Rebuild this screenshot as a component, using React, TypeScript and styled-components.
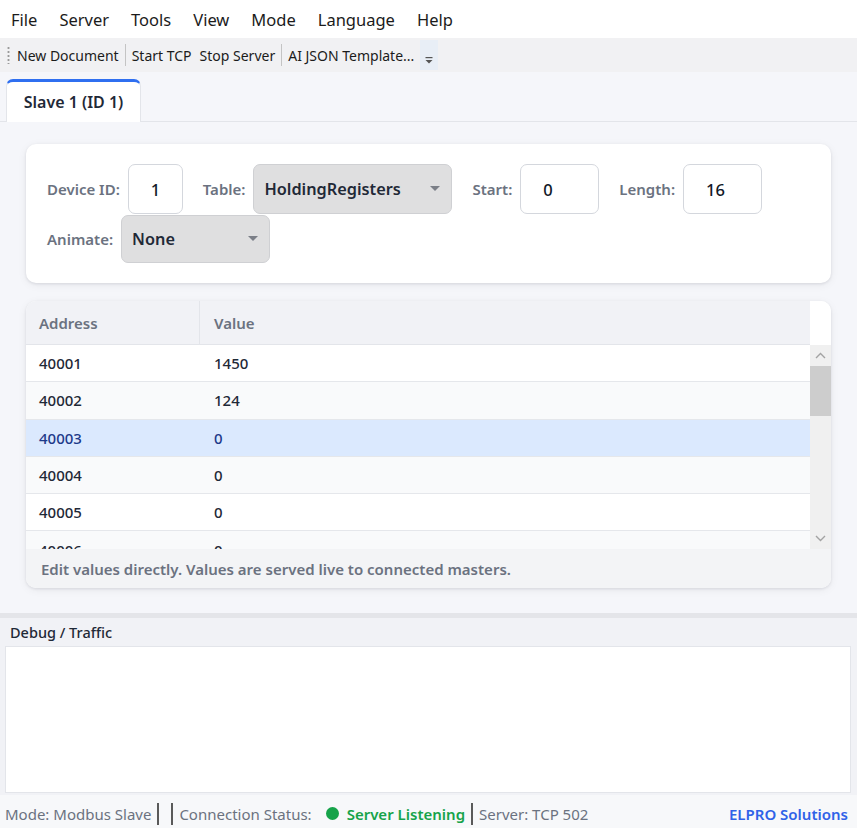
import React from 'react'
import styled, { createGlobalStyle } from 'styled-components'

const FONT = `"Noto Sans", "Open Sans", "DejaVu Sans", sans-serif`

const GlobalStyle = createGlobalStyle`
  html, body {
    margin: 0;
    padding: 0;
    height: 100%;
  }
  body {
    font-family: ${FONT};
    background: #f5f6fa;
    overflow: hidden;
  }
  #root {
    height: 100%;
  }
  * {
    box-sizing: border-box;
  }
`

interface RegisterRow {
  address: number
  value: number
}

const rows: RegisterRow[] = [
  { address: 40001, value: 1450 },
  { address: 40002, value: 124 },
  { address: 40003, value: 0 },
  { address: 40004, value: 0 },
  { address: 40005, value: 0 },
  { address: 40006, value: 0 }
]

const SELECTED_ROW = 2

const menus = ['File', 'Server', 'Tools', 'View', 'Mode', 'Language', 'Help']

const Caret = () => (
  <svg width="10" height="6" viewBox="0 0 10 6">
    <path d="M0 0 L10 0 L5 5 Z" fill="#7b7f87" />
  </svg>
)

const Chevron: React.FC<{ up?: boolean }> = ({ up }) => (
  <svg width="11" height="7" viewBox="0 0 11 7">
    <path
      d={up ? 'M1 6 L5.5 1.5 L10 6' : 'M1 1 L5.5 5.5 L10 1'}
      fill="none"
      stroke="#a3a3a3"
      strokeWidth="1.4"
    />
  </svg>
)

const OverflowGlyph = () => (
  <svg width="8" height="8" viewBox="0 0 8 8">
    <rect x="0.5" y="0" width="7" height="1.2" fill="#555" />
    <path d="M0.5 3 L7.5 3 L4 6.5 Z" fill="#555" />
  </svg>
)

const App: React.FC = () => {
  return (
    <Window>
      <GlobalStyle />
      <MenuBar>
        {menus.map((m) => (
          <MenuItem key={m}>{m}</MenuItem>
        ))}
      </MenuBar>

      <ToolBar>
        <Grip />
        <ToolButton>New Document</ToolButton>
        <ToolSep />
        <ToolButton>Start TCP</ToolButton>
        <ToolButton>Stop Server</ToolButton>
        <ToolSep />
        <ToolButton>AI JSON Template...</ToolButton>
        <OverflowButton>
          <OverflowGlyph />
        </OverflowButton>
      </ToolBar>

      <Main>
        <TabStrip>
          <Tab>Slave 1 (ID 1)</Tab>
        </TabStrip>

        <Content>
          <SettingsCard>
            <Field>
              <Label>Device ID:</Label>
              <NumberBox $width={55}>1</NumberBox>
            </Field>
            <Field>
              <Label>Table:</Label>
              <SelectBox $width={199}>
                HoldingRegisters
                <Caret />
              </SelectBox>
            </Field>
            <Field>
              <Label>Start:</Label>
              <NumberBox $width={79}>0</NumberBox>
            </Field>
            <Field>
              <Label>Length:</Label>
              <NumberBox $width={79}>16</NumberBox>
            </Field>
            <Field>
              <Label>Animate:</Label>
              <SelectBox $width={149} $short>
                None
                <Caret />
              </SelectBox>
            </Field>
          </SettingsCard>

          <TableCard>
            <TableGrid>
              <HeaderRow>
                <HeaderCell $first>Address</HeaderCell>
                <HeaderCell>Value</HeaderCell>
              </HeaderRow>
              <HeaderBlank />
              <TableBody>
                {rows.map((r, i) => (
                  <Row key={r.address} $odd={i % 2 === 1} $selected={i === SELECTED_ROW}>
                    <Cell $first $selected={i === SELECTED_ROW}>
                      {r.address}
                    </Cell>
                    <Cell $selected={i === SELECTED_ROW}>{r.value}</Cell>
                  </Row>
                ))}
              </TableBody>
              <ScrollTrack>
                <ScrollArrow>
                  <Chevron up />
                </ScrollArrow>
                <ScrollThumb />
                <ScrollSpacer />
                <ScrollArrow>
                  <Chevron />
                </ScrollArrow>
              </ScrollTrack>
            </TableGrid>
            <TableFooter>Edit values directly. Values are served live to connected masters.</TableFooter>
          </TableCard>
        </Content>
      </Main>

      <Splitter />

      <DebugPanel>
        <DebugHeader>Debug / Traffic</DebugHeader>
        <DebugLog />
      </DebugPanel>

      <StatusBar>
        <StatusText>Mode: Modbus Slave</StatusText>
        <StatusSep />
        <StatusSep />
        <StatusText>Connection Status:</StatusText>
        <StatusDot />
        <StatusOk>Server Listening</StatusOk>
        <StatusSep />
        <StatusText>Server: TCP 502</StatusText>
        <Brand>ELPRO Solutions</Brand>
      </StatusBar>
    </Window>
  )
}

const Window = styled.div`
  display: flex;
  flex-direction: column;
  height: 100vh;
  width: 100%;
`

const MenuBar = styled.div`
  height: 38px;
  flex-shrink: 0;
  display: flex;
  align-items: center;
  background: #ffffff;
`

const MenuItem = styled.span`
  padding: 0 11px;
  font-size: 16.5px;
  color: #1b1b1b;
`

const ToolBar = styled.div`
  height: 34px;
  flex-shrink: 0;
  display: flex;
  align-items: center;
  padding-left: 7px;
  background: #f1f1f3;
`

const Grip = styled.div`
  width: 3px;
  height: 18px;
  margin-right: 3px;
  background-image: radial-gradient(circle, #9a9a9a 1px, transparent 1.2px);
  background-size: 3px 4px;
`

const ToolButton = styled.span`
  padding: 0 4px;
  font-size: 14px;
  color: #1b1b1b;
  white-space: nowrap;
`

const ToolSep = styled.div`
  width: 1px;
  height: 22px;
  margin: 0 2px;
  background: #c4c4c4;
`

const OverflowButton = styled.div`
  width: 18px;
  height: 30px;
  margin-left: 2px;
  display: flex;
  align-items: flex-end;
  justify-content: center;
  padding-bottom: 5px;
  background: #e8eef6;
`

const Main = styled.div`
  height: 541px;
  flex-shrink: 0;
  display: flex;
  flex-direction: column;
  background: #f5f6fa;
`

const TabStrip = styled.div`
  display: flex;
  padding: 7px 0 0 6px;
  border-bottom: 1px solid #e3e5ea;
`

const Tab = styled.div`
  width: 135px;
  height: 43px;
  display: flex;
  align-items: center;
  justify-content: center;
  background: #ffffff;
  border: 1px solid #e3e5ea;
  border-top: 3px solid #2f6ff0;
  border-bottom: none;
  border-radius: 7px 7px 0 0;
  font-size: 16px;
  font-weight: 600;
  color: #1f2937;
  margin-bottom: -1px;
`

const Content = styled.div`
  display: flex;
  flex-direction: column;
  gap: 18px;
  padding: 22px 26px 0;
`

const Card = styled.div`
  background: #ffffff;
  border-radius: 10px;
  box-shadow: 0 1px 3px rgba(15, 23, 42, 0.1), 0 2px 10px rgba(15, 23, 42, 0.06);
`

const SettingsCard = styled(Card)`
  height: 139px;
  display: flex;
  flex-wrap: wrap;
  align-content: flex-start;
  column-gap: 20px;
  row-gap: 1px;
  padding: 20px 20px 20px 21px;
`

const Field = styled.div`
  display: flex;
  align-items: center;
  gap: 8px;
`

const Label = styled.span`
  font-size: 15px;
  font-weight: 600;
  color: #6b7280;
`

const NumberBox = styled.div<{ $width: number }>`
  width: ${(p) => p.$width}px;
  height: 50px;
  display: flex;
  align-items: center;
  padding-left: 22px;
  border: 1px solid #d4d7dd;
  border-radius: 7px;
  background: #ffffff;
  font-size: 16.5px;
  font-weight: 500;
  color: #111827;
`

const SelectBox = styled.div<{ $width: number; $short?: boolean }>`
  width: ${(p) => p.$width}px;
  height: ${(p) => (p.$short ? 48 : 50)}px;
  display: flex;
  align-items: center;
  justify-content: space-between;
  padding: 0 11px 0 10px;
  border: 1px solid #cfd0d3;
  border-radius: 7px;
  background: #dfdfe0;
  font-size: 16.3px;
  font-weight: 600;
  color: #1f2937;
`

const TableCard = styled(Card)`
  height: 287px;
  display: flex;
  flex-direction: column;
  overflow: hidden;
`

const TableGrid = styled.div`
  flex: 1;
  min-height: 0;
  display: grid;
  grid-template-columns: 1fr 21px;
  grid-template-rows: 44px 1fr;
`

const HeaderRow = styled.div`
  display: grid;
  grid-template-columns: 174px 1fr;
  background: #f1f2f6;
  border-bottom: 1px solid #e3e5ea;
`

const HeaderCell = styled.div<{ $first?: boolean }>`
  display: flex;
  align-items: center;
  padding-left: ${(p) => (p.$first ? 13 : 14)}px;
  border-right: ${(p) => (p.$first ? '1px solid #e3e5ea' : 'none')};
  font-size: 15px;
  font-weight: 600;
  color: #6b7280;
`

const HeaderBlank = styled.div`
  background: #ffffff;
`

const TableBody = styled.div`
  overflow: hidden;
  min-height: 0;
`

const Row = styled.div<{ $odd: boolean; $selected: boolean }>`
  height: 37.3px;
  display: grid;
  grid-template-columns: 174px 1fr;
  border-bottom: 1px solid #e5e7eb;
  background: ${(p) => (p.$selected ? '#dbe9fe' : p.$odd ? '#f9fafb' : '#ffffff')};
`

const Cell = styled.div<{ $first?: boolean; $selected?: boolean }>`
  display: flex;
  align-items: center;
  padding-left: ${(p) => (p.$first ? 13 : 14)}px;
  font-size: 15px;
  font-weight: 500;
  color: ${(p) => (p.$selected ? '#1e3a8a' : '#1f2937')};
`

const ScrollTrack = styled.div`
  display: flex;
  flex-direction: column;
  background: #f0f0f0;
`

const ScrollArrow = styled.div`
  height: 21px;
  display: flex;
  align-items: center;
  justify-content: center;
`

const ScrollThumb = styled.div`
  height: 50px;
  background: #cdcdcd;
`

const ScrollSpacer = styled.div`
  flex: 1;
`

const TableFooter = styled.div`
  height: 39px;
  flex-shrink: 0;
  display: flex;
  align-items: center;
  padding-left: 15px;
  background: #f3f4f6;
  font-size: 15px;
  font-weight: 600;
  color: #6b7280;
`

const Splitter = styled.div`
  height: 5px;
  flex-shrink: 0;
  background: #e4e5e9;
`

const DebugPanel = styled.div`
  height: 177px;
  flex-shrink: 0;
  display: flex;
  flex-direction: column;
  padding: 0 6px 2px 5px;
  background: #f1f2f6;
`

const DebugHeader = styled.div`
  height: 28px;
  display: flex;
  align-items: center;
  padding-left: 5px;
  font-size: 14.5px;
  font-weight: 500;
  color: #1f2937;
`

const DebugLog = styled.div`
  flex: 1;
  background: #ffffff;
  border: 1px solid #e3e5ea;
`

const StatusBar = styled.div`
  flex: 1;
  display: flex;
  align-items: center;
  padding: 4px 9px 0 5px;
  background: #f7f8fa;
  font-size: 15px;
  color: #6b7280;
  white-space: nowrap;
`

const StatusText = styled.span``

const StatusSep = styled.div`
  width: 2px;
  height: 22px;
  margin: 0 6px;
  background: #5a5a5a;
`

const StatusDot = styled.span`
  width: 13px;
  height: 13px;
  margin: 0 8px 0 14px;
  border-radius: 50%;
  background: #16a34a;
`

const StatusOk = styled.span`
  font-weight: 600;
  color: #16a34a;
`

const Brand = styled.span`
  margin-left: auto;
  font-weight: 600;
  color: #2f62e8;
`

export default App
